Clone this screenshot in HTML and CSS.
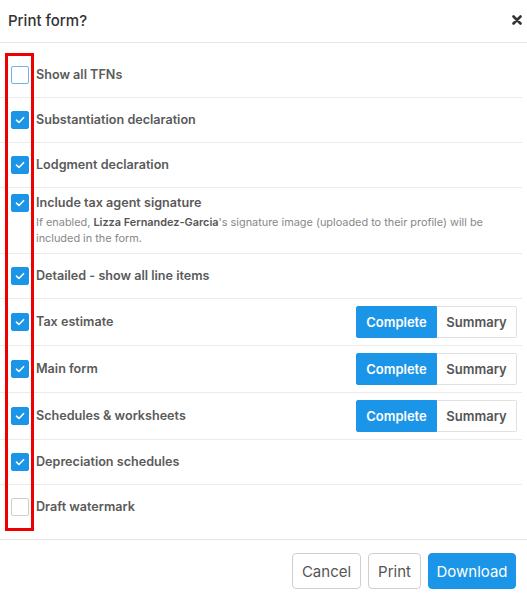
FILE: index.html
```html
<!DOCTYPE html>
<html lang="en">
<head>
<meta charset="utf-8">
<title>Print form?</title>
<link rel="stylesheet" href="styles.css">
</head>
<body>
<div class="modal">
  <div class="modal-header">
    <h1 class="modal-title">Print form?</h1>
    <button class="close" aria-label="Close">
      <svg width="10" height="10" viewBox="0 0 10 10"><path d="M1.5 1.5 L8.5 8.5 M8.5 1.5 L1.5 8.5" stroke="#333" stroke-width="2.6" stroke-linecap="round"/></svg>
    </button>
  </div>
  <div class="modal-body">
    <div class="row">
      <span class="cb focus"></span>
      <span class="label">Show all TFNs</span>
    </div>
    <div class="row">
      <span class="cb on"><svg viewBox="0 0 18 18"><path d="M5 9.2 L7.8 11.8 L13 6.4" /></svg></span>
      <span class="label">Substantiation declaration</span>
    </div>
    <div class="row">
      <span class="cb on"><svg viewBox="0 0 18 18"><path d="M5 9.2 L7.8 11.8 L13 6.4" /></svg></span>
      <span class="label">Lodgment declaration</span>
    </div>
    <div class="row row-tall">
      <span class="cb on"><svg viewBox="0 0 18 18"><path d="M5 9.2 L7.8 11.8 L13 6.4" /></svg></span>
      <div class="text">
        <span class="label">Include tax agent signature</span>
        <p class="desc">If enabled, <b>Lizza Fernandez-Garcia</b>'s signature image (uploaded to their profile) will be included in the form.</p>
      </div>
    </div>
    <div class="row">
      <span class="cb on"><svg viewBox="0 0 18 18"><path d="M5 9.2 L7.8 11.8 L13 6.4" /></svg></span>
      <span class="label">Detailed - show all line items</span>
    </div>
    <div class="row row-btn">
      <span class="cb on"><svg viewBox="0 0 18 18"><path d="M5 9.2 L7.8 11.8 L13 6.4" /></svg></span>
      <span class="label">Tax estimate</span>
      <div class="seg"><button class="seg-btn active">Complete</button><button class="seg-btn">Summary</button></div>
    </div>
    <div class="row row-btn">
      <span class="cb on"><svg viewBox="0 0 18 18"><path d="M5 9.2 L7.8 11.8 L13 6.4" /></svg></span>
      <span class="label">Main form</span>
      <div class="seg"><button class="seg-btn active">Complete</button><button class="seg-btn">Summary</button></div>
    </div>
    <div class="row row-btn">
      <span class="cb on"><svg viewBox="0 0 18 18"><path d="M5 9.2 L7.8 11.8 L13 6.4" /></svg></span>
      <span class="label">Schedules &amp; worksheets</span>
      <div class="seg"><button class="seg-btn active">Complete</button><button class="seg-btn">Summary</button></div>
    </div>
    <div class="row">
      <span class="cb on"><svg viewBox="0 0 18 18"><path d="M5 9.2 L7.8 11.8 L13 6.4" /></svg></span>
      <span class="label">Depreciation schedules</span>
    </div>
    <div class="row last">
      <span class="cb"></span>
      <span class="label">Draft watermark</span>
    </div>
    <div class="highlight"></div>
  </div>
  <div class="modal-footer">
    <button class="btn btn-cancel">Cancel</button>
    <button class="btn btn-print">Print</button>
    <button class="btn primary">Download</button>
  </div>
</div>
</body>
</html>
```
FILE: styles.css
```css
* { box-sizing: border-box; }
html, body { margin: 0; padding: 0; background: #fff; }
body {
  font-family: Inter, "Noto Sans", "Liberation Sans", sans-serif;
  color: #555;
  width: 527px;
}
.modal { width: 527px; }
.modal-header {
  height: 43px;
  border-bottom: 1px solid #e6e6e6;
  display: flex;
  align-items: center;
  justify-content: space-between;
  padding: 0 5px 2px 8px;
}
.modal-title {
  margin: 0;
  font-size: 15px;
  font-weight: 500;
  color: #333;
}
.close {
  border: 0;
  background: none;
  padding: 0;
  width: 10px;
  height: 10px;
  display: flex;
}
.modal-body {
  position: relative;
  padding: 10px 5px 10px 0;
}
.row {
  display: flex;
  align-items: center;
  gap: 7px;
  min-height: 45px;
  padding-left: 11px;
  border-bottom: 1px solid #ebebeb;
}
.row.last { border-bottom: 0; min-height: 44px; }
.row-btn { min-height: 47px; }
.row-tall {
  align-items: flex-start;
  padding-top: 6px;
  padding-bottom: 7px;
}
.cb {
  flex: none;
  width: 18px;
  height: 18px;
  border: 1px solid #cfcfcf;
  border-radius: 2px;
  background: #fff;
  display: flex;
}
.cb.focus { border-color: #6cb4ea; }
.cb.on {
  background: #1b95e7;
  border-color: #1b95e7;
}
.cb svg { width: 16px; height: 16px; }
.cb svg path {
  fill: none;
  stroke: #fff;
  stroke-width: 1.8;
  stroke-linecap: round;
  stroke-linejoin: round;
}
.label {
  font-size: 12.6px;
  font-weight: 600;
  line-height: 18px;
  color: #5a5a5a;
}
.text { display: flex; flex-direction: column; }
.desc {
  margin: 2px 0 0;
  font-size: 10.9px;
  line-height: 16px;
  color: #888;
  max-width: 460px;
}
.desc b { color: #555; font-weight: 600; }
.seg {
  margin-left: auto;
  margin-right: 5px;
  display: flex;
  height: 32px;
}
.seg-btn {
  font-family: inherit;
  font-size: 13px;
  font-weight: 600;
  border: 1px solid #e0e0e0;
  background: #fff;
  color: #555;
  padding: 0;
  width: 80px;
}
.seg-btn.active {
  background: #1b95e7;
  border-color: #1b95e7;
  color: #fff;
  border-radius: 2px 0 0 2px;
  width: 81px;
}
.seg-btn:last-child { border-left: 0; border-radius: 0 2px 2px 0; }
.highlight {
  position: absolute;
  left: 5px;
  top: 10px;
  width: 29px;
  height: 478px;
  border: 3px solid #ee0000;
}
.modal-footer {
  border-top: 1px solid #e6e6e6;
  display: flex;
  justify-content: flex-end;
  gap: 7px;
  padding: 13px 11px 0 0;
}
.btn {
  font-family: inherit;
  font-size: 15px;
  height: 36px;
  padding: 0;
  width: 88px;
  border: 1px solid #cfcfcf;
  border-radius: 4px;
  background: #fff;
  color: #555;
}
.btn-cancel { width: 69px; }
.btn-print { width: 53px; }
.btn.primary {
  background: #1b95e7;
  border-color: #1b95e7;
  color: #fff;
}
```
